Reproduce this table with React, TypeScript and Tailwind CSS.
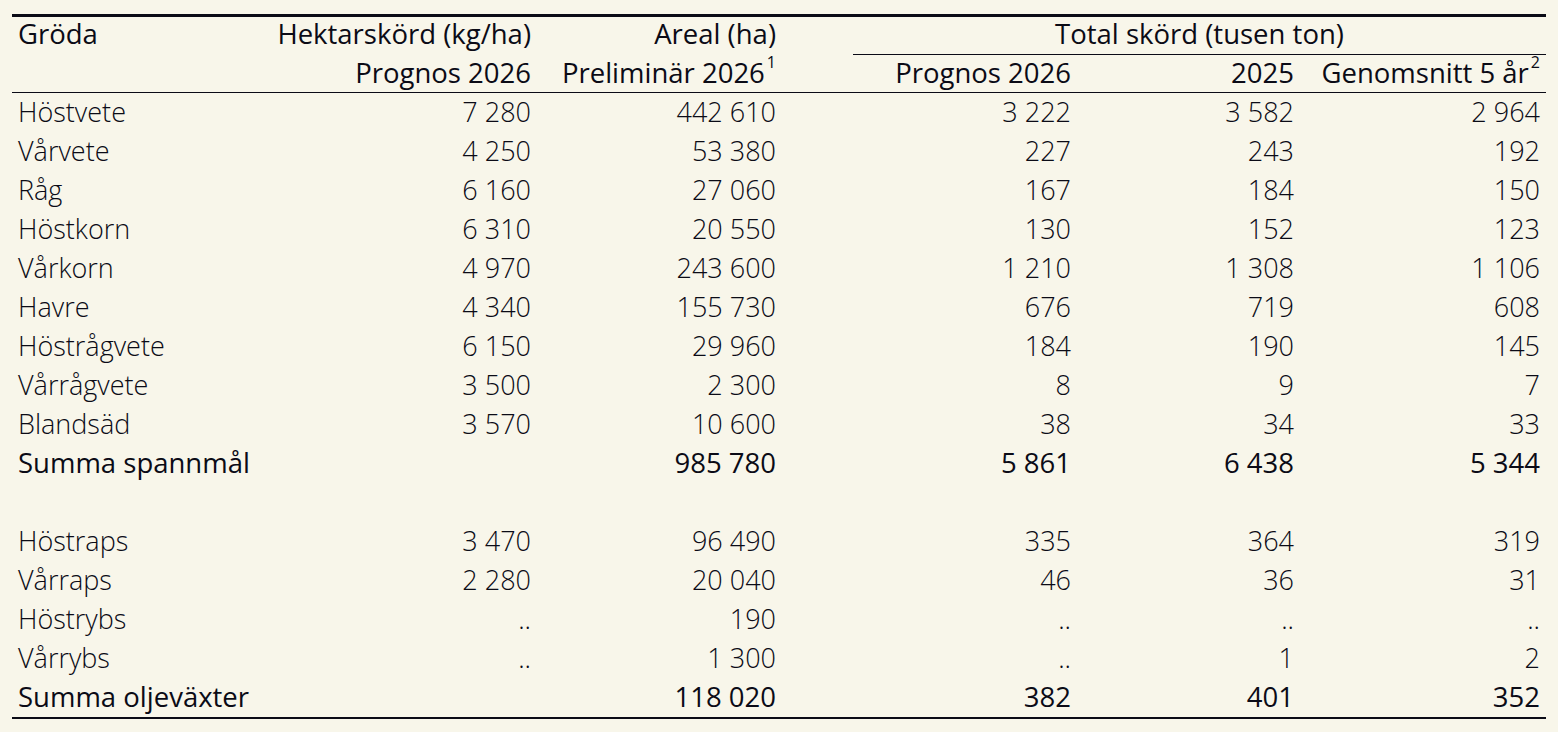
import React from 'react'

type Row = { name: string; vals: string[]; sum?: boolean }

const cereals: Row[] = [
  { name: 'Höstvete', vals: ['7 280', '442 610', '3 222', '3 582', '2 964'] },
  { name: 'Vårvete', vals: ['4 250', '53 380', '227', '243', '192'] },
  { name: 'Råg', vals: ['6 160', '27 060', '167', '184', '150'] },
  { name: 'Höstkorn', vals: ['6 310', '20 550', '130', '152', '123'] },
  { name: 'Vårkorn', vals: ['4 970', '243 600', '1 210', '1 308', '1 106'] },
  { name: 'Havre', vals: ['4 340', '155 730', '676', '719', '608'] },
  { name: 'Höstrågvete', vals: ['6 150', '29 960', '184', '190', '145'] },
  { name: 'Vårrågvete', vals: ['3 500', '2 300', '8', '9', '7'] },
  { name: 'Blandsäd', vals: ['3 570', '10 600', '38', '34', '33'] },
  { name: 'Summa spannmål', vals: ['', '985 780', '5 861', '6 438', '5 344'], sum: true },
]

const oilseeds: Row[] = [
  { name: 'Höstraps', vals: ['3 470', '96 490', '335', '364', '319'] },
  { name: 'Vårraps', vals: ['2 280', '20 040', '46', '36', '31'] },
  { name: 'Höstrybs', vals: ['..', '190', '..', '..', '..'] },
  { name: 'Vårrybs', vals: ['..', '1 300', '..', '1', '2'] },
  { name: 'Summa oljeväxter', vals: ['', '118 020', '382', '401', '352'], sum: true },
]

function DataRow({ row }: { row: Row }) {
  const weight = row.sum ? 'font-normal text-[27.5px]' : 'font-light'
  return (
    <>
      <div className={`h-[39px] flex items-center px-[6px] pb-[2px] ${weight}`}>{row.name}</div>
      {row.vals.map((v, i) => (
        <div key={i} className={`h-[39px] flex items-center justify-end px-[6px] pb-[2px] ${weight}`}>
          {v}
        </div>
      ))}
    </>
  )
}

export default function App() {
  return (
    <div className="w-[1558px] h-[732px] bg-[#f8f6ea] text-[#0b0b16] overflow-hidden font-['Open_Sans',sans-serif] text-[27px] leading-none pt-[14px] pl-[12px]">
      <div className="w-[1534px] border-t-[3px] border-b-2 border-[#0b0b16]">
        {/* header */}
        <div className="grid grid-cols-[248px_277px_245px_295px_223px_246px] border-b border-[#0b0b16] text-[27.5px]">
          <div className="h-[38px] flex items-center px-[6px] pb-[4px]">Gröda</div>
          <div className="h-[38px] flex items-center justify-end px-[6px] pb-[4px]">Hektarskörd (kg/ha)</div>
          <div className="h-[38px] flex items-center justify-end px-[6px] pb-[4px]">Areal (ha)</div>
          <div className="col-span-3 h-[38px] ml-[71px] flex items-center justify-center border-b border-[#0b0b16] pb-[4px]">
            Total skörd (tusen ton)
          </div>
          <div className="h-[37px]" />
          <div className="h-[37px] flex items-center justify-end px-[6px] pb-[2px]">Prognos 2026</div>
          <div className="h-[37px] flex items-center justify-end px-[6px] pb-[2px]">
            Preliminär 2026<sup className="text-[16px] -top-[11px] ml-[2px]">1</sup>
          </div>
          <div className="h-[37px] flex items-center justify-end px-[6px] pb-[2px]">Prognos 2026</div>
          <div className="h-[37px] flex items-center justify-end px-[6px] pb-[2px]">2025</div>
          <div className="h-[37px] flex items-center justify-end px-[6px] pb-[2px]">
            Genomsnitt 5 år<sup className="text-[16px] -top-[11px] ml-[2px]">2</sup>
          </div>
        </div>

        <div className="grid grid-cols-[248px_277px_245px_295px_223px_246px]">
          {cereals.map((r) => (
            <DataRow key={r.name} row={r} />
          ))}
          <div className="col-span-6 h-[39px]" />
          {oilseeds.map((r) => (
            <DataRow key={r.name} row={r} />
          ))}
        </div>
      </div>
    </div>
  )
}
